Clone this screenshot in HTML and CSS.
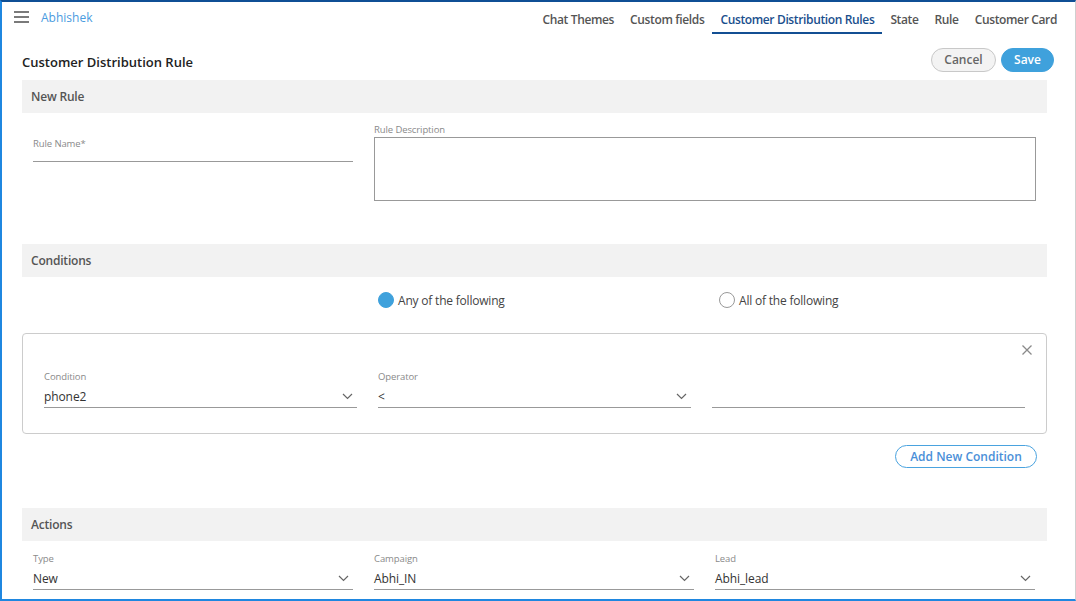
FILE: index.html
```html
<!DOCTYPE html>
<html>
<head>
<meta charset="utf-8">
<link rel="stylesheet" href="styles.css">
</head>
<body>
<div class="frame">
  <header class="topbar">
    <div class="brand">
      <span class="burger"><i></i><i></i><i></i></span>
      <span class="user">Abhishek</span>
    </div>
    <nav class="tabs">
      <a class="tab">Chat Themes</a>
      <a class="tab">Custom fields</a>
      <a class="tab active">Customer Distribution Rules</a>
      <a class="tab">State</a>
      <a class="tab">Rule</a>
      <a class="tab">Customer Card</a>
    </nav>
  </header>
  <main class="page">
    <div class="title-row">
      <h1 class="title">Customer Distribution Rule</h1>
      <div class="actions-btns">
        <button class="btn btn-cancel">Cancel</button>
        <button class="btn btn-save">Save</button>
      </div>
    </div>

    <div class="section-head">New Rule</div>
    <div class="rule-body">
      <div class="field field-name">
        <label class="lbl">Rule Name*</label>
        <div class="line-input"></div>
      </div>
      <div class="field field-desc">
        <label class="lbl">Rule Description</label>
        <div class="textarea"></div>
      </div>
    </div>

    <div class="section-head">Conditions</div>
    <div class="radio-row">
      <div class="radio-col"></div>
      <div class="radio-col"><span class="radio on"></span><span class="radio-text">Any of the following</span></div>
      <div class="radio-col"><span class="radio"></span><span class="radio-text">All of the following</span></div>
    </div>

    <div class="cond-box">
      <div class="cond-top"><span class="close">
        <svg width="12" height="12" viewBox="0 0 12 12"><path d="M1.5 1.5L10.5 10.5M10.5 1.5L1.5 10.5" stroke="#8a8a8a" stroke-width="1.3" fill="none"/></svg>
      </span></div>
      <div class="cond-grid">
        <div class="field">
          <label class="lbl">Condition</label>
          <div class="select"><span class="val">phone2</span><svg class="chev" width="11" height="7" viewBox="0 0 11 7"><path d="M1 1L5.5 5.5L10 1" stroke="#666" stroke-width="1.2" fill="none"/></svg></div>
        </div>
        <div class="field">
          <label class="lbl">Operator</label>
          <div class="select"><span class="val">&lt;</span><svg class="chev" width="11" height="7" viewBox="0 0 11 7"><path d="M1 1L5.5 5.5L10 1" stroke="#666" stroke-width="1.2" fill="none"/></svg></div>
        </div>
        <div class="field">
          <label class="lbl"></label>
          <div class="select"></div>
        </div>
      </div>
    </div>
    <div class="add-row"><button class="btn-add">Add New Condition</button></div>

    <div class="section-head">Actions</div>
    <div class="act-grid">
      <div class="field">
        <label class="lbl">Type</label>
        <div class="select"><span class="val">New</span><svg class="chev" width="11" height="7" viewBox="0 0 11 7"><path d="M1 1L5.5 5.5L10 1" stroke="#666" stroke-width="1.2" fill="none"/></svg></div>
      </div>
      <div class="field">
        <label class="lbl">Campaign</label>
        <div class="select"><span class="val">Abhi_IN</span><svg class="chev" width="11" height="7" viewBox="0 0 11 7"><path d="M1 1L5.5 5.5L10 1" stroke="#666" stroke-width="1.2" fill="none"/></svg></div>
      </div>
      <div class="field">
        <label class="lbl">Lead</label>
        <div class="select"><span class="val">Abhi_lead</span><svg class="chev" width="11" height="7" viewBox="0 0 11 7"><path d="M1 1L5.5 5.5L10 1" stroke="#666" stroke-width="1.2" fill="none"/></svg></div>
      </div>
    </div>
  </main>
</div>
</body>
</html>
```

FILE: styles.css
```css
* { box-sizing: border-box; }
html, body { margin: 0; padding: 0; background: #fff; }
body { font-family: "Open Sans", "Noto Sans", sans-serif; color: #333; }

.frame {
  width: 1076px;
  height: 601px;
  overflow: hidden;
  border-top: 2px solid #0f4f95;
  border-left: 2px solid #1f87e0;
  border-bottom: 2px solid #1f87e0;
  border-right: 1px solid #cfcfcf;
  display: flex;
  flex-direction: column;
}

.topbar {
  height: 32px;
  display: flex;
  justify-content: space-between;
  align-items: stretch;
  padding: 0 10px 0 12px;
  flex-shrink: 0;
}
.brand { display: flex; align-items: center; gap: 12px; margin-top: -2px; }
.burger { display: flex; flex-direction: column; gap: 3px; width: 15px; }
.burger i { display: block; height: 2px; background: #7a7a7a; }
.user { font-size: 12px; color: #4a9be0; }

.tabs { display: flex; align-items: stretch; }
.tab {
  padding: 4px 8px 0;
  font-size: 12px;
  font-weight: 600;
  color: #555;
  display: flex;
  align-items: center;
  border-bottom: 2px solid transparent;
  letter-spacing: -0.36px;
}
.tab.active { color: #1a4f8d; border-bottom-color: #134f93; }

.page { padding: 0 28px 0 20px; }

.title-row {
  height: 46px;
  display: flex;
  align-items: center;
  justify-content: space-between;
  padding-top: 5px;
}
.title { margin: 4px 0 0 0; font-size: 13px; font-weight: 600; color: #222; letter-spacing: 0; }
.actions-btns { display: flex; gap: 5px; margin-right: -7px; }
.btn {
  height: 24px;
  border-radius: 12px;
  font-family: inherit;
  font-size: 12px;
  font-weight: 600;
  padding: 0;
  cursor: pointer;
}
.btn-cancel { width: 65px; background: #f3f3f3; border: 1px solid #c8c8c8; color: #666; }
.btn-save { width: 53px; background: #3fa1dc; border: 1px solid #3fa1dc; color: #fff; }

.section-head {
  height: 33px;
  background: #f2f2f2;
  padding-left: 9px;
  display: flex;
  align-items: center;
  font-size: 12px;
  font-weight: 600;
  color: #555;
  letter-spacing: -0.2px;
}

.lbl { display: block; font-size: 9.5px; color: #8a8a8a; height: 14px; line-height: 14px; letter-spacing: -0.1px; }

.rule-body {
  height: 131px;
  display: grid;
  grid-template-columns: 320px 662px;
  column-gap: 21px;
  padding: 0 11px;
}
.field-name { padding-top: 24px; }
.line-input { height: 11px; border-bottom: 1px solid #999; }
.field-desc { padding-top: 10px; }
.textarea { height: 64px; border: 1px solid #999; }

.radio-row {
  height: 56px;
  padding: 15px 11px 0;
  display: grid;
  grid-template-columns: 320px 320px 320px;
  column-gap: 21px;
}
.radio-col { display: flex; align-items: center; height: 16px; padding-left: 4px; gap: 4px; }
.radio { width: 16px; height: 16px; border-radius: 50%; border: 1px solid #999; background: #fff; flex-shrink: 0; }
.radio.on { background: #3fa1dc; border-color: #3fa1dc; }
.radio-text { font-size: 12px; color: #444; letter-spacing: -0.2px; }

.cond-box {
  border: 1px solid #ccc;
  border-radius: 4px;
  padding: 10px 21px 25px;
}
.cond-top { height: 26px; display: flex; justify-content: flex-end; margin-right: -8px; }
.close { width: 12px; height: 12px; display: block; }
.close svg { display: block; }
.cond-grid {
  display: grid;
  grid-template-columns: 313px 313px 313px;
  column-gap: 21px;
}

.select {
  height: 24px;
  border-bottom: 1px solid #999;
  display: flex;
  align-items: center;
  justify-content: space-between;
  padding: 2px 4px 0 0;
}
.val { font-size: 12px; color: #333; letter-spacing: -0.1px; }
.chev { display: block; }

.add-row { display: flex; justify-content: flex-end; padding-top: 11px; padding-right: 10px; height: 74px; }
.btn-add {
  height: 23px;
  width: 142px;
  border-radius: 12px;
  border: 1px solid #4aa3df;
  background: #fff;
  color: #4a8fd8;
  font-family: inherit;
  font-size: 12px;
  font-weight: 600;
  padding: 0;
}

.act-grid {
  padding: 11px 11px 0;
  display: grid;
  grid-template-columns: 320px 320px 320px;
  column-gap: 21px;
}
```
